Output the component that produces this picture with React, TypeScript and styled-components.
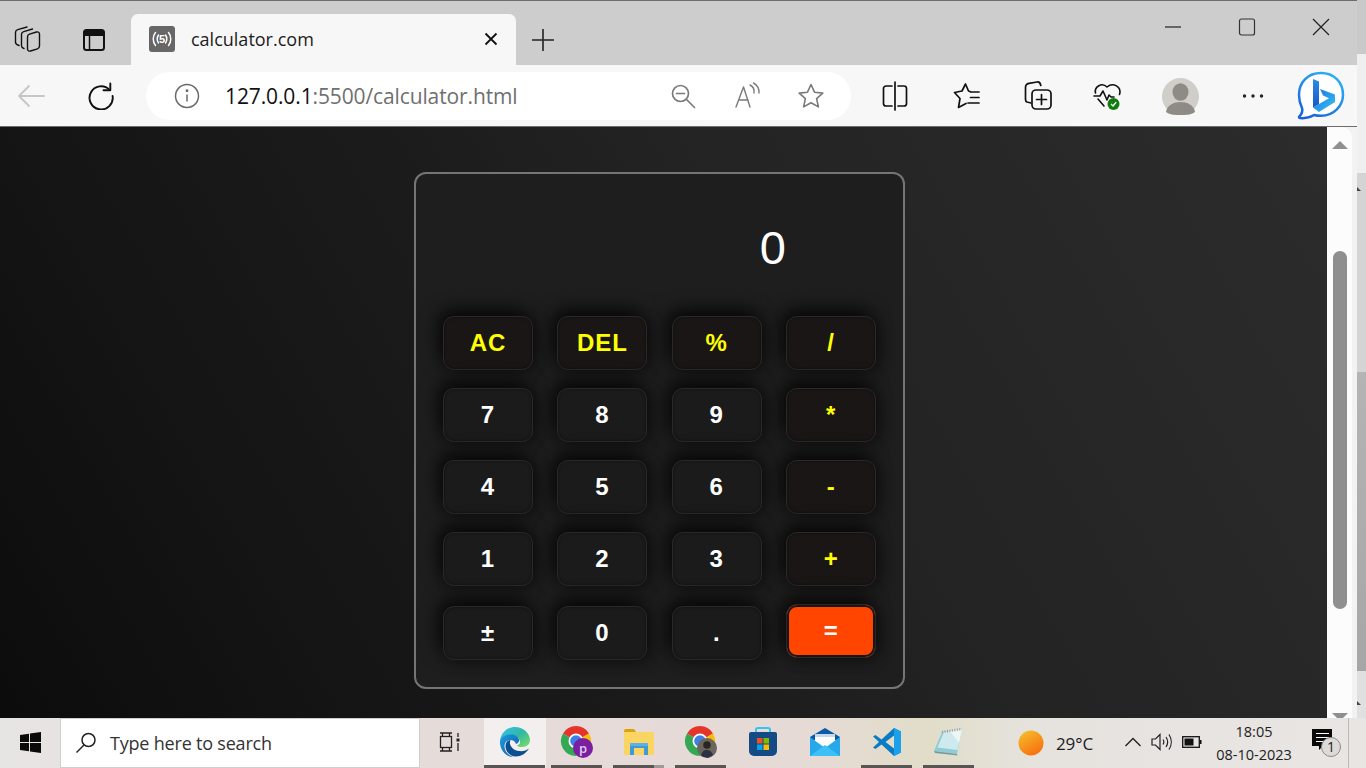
import React from "react";
import styled, { createGlobalStyle } from "styled-components";

const Global = createGlobalStyle`
  html, body { margin: 0; padding: 0; height: 768px; overflow: hidden; background: #111; }
  * { box-sizing: border-box; }
`;

const UI = `"Open Sans", "Noto Sans", "Liberation Sans", sans-serif`;

const Desktop = styled.div`
  width: 1366px; height: 768px; display: flex; flex-direction: column; overflow: hidden;
`;
const Upper = styled.div`
  display: flex; height: 718px;
`;
const Browser = styled.div`
  width: 1357px; display: flex; flex-direction: column;
`;
const Backdrop = styled.div`
  width: 9px; position: relative;
  background: linear-gradient(180deg, #c9c9c9 0 54px, #efefef 54px 173px, #d4d4d4 173px 372px, #b4b4b4 372px, #a6a6a6 671px, #e0e0e0 671px 100%);
  &::before, &::after {
    content: ""; position: absolute; left: 0; width: 0; height: 0;
    border-bottom: 4px solid #444; border-right: 4px solid transparent;
  }
  &::before { top: 187px; }
  &::after { top: 701px; }
`;
const TabStrip = styled.div`
  height: 65px; background: #cdcdcd; border-top: 1px solid #6e6e6e;
  display: flex; align-items: flex-end;
`;
const StripButton = styled.div`
  width: 56px; height: 50px; display: flex; align-items: center; justify-content: center; padding-bottom: 1px; flex: none;
`;
const StripLead = styled.div`
  display: flex; width: 131px; gap: 10px; flex: none;
`;
const Tab = styled.div`
  width: 385px; height: 51px; background: #f7f7f7; border-radius: 7px 7px 0 0;
  display: flex; align-items: center; padding: 0 18px 2px 18px; gap: 16px; flex: none;
`;
const TabTitle = styled.span`
  font: 400 18px ${UI}; color: #1c1c1c; flex: 1; white-space: nowrap;
`;
const NewTab = styled.div`
  width: 54px; height: 50px; display: flex; align-items: center; justify-content: center; flex: none;
`;
const Spacer = styled.div`
  flex: 1;
`;
const WindowControls = styled.div`
  display: flex; height: 64px; align-items: flex-start; padding: 14px 24px 0 0; gap: 50px;
`;
const Toolbar = styled.div`
  height: 62px; background: #f7f7f7; display: flex; align-items: center;
  padding: 1px 0 0 14px; border-bottom: 1px solid #6d6d6d;
`;
const NavIcon = styled.div<{ $w: number; $ml?: number }>`
  width: ${p => p.$w}px; margin-left: ${p => p.$ml ?? 0}px; display: flex; align-items: center; justify-content: center; height: 48px; flex: none;
`;
const Omnibox = styled.div`
  width: 705px; height: 48px; background: #fff; border-radius: 24px; margin-left: 25px; margin-right: 8px;
  display: flex; align-items: center; padding-left: 28px; flex: none;
`;
const Url = styled.div`
  font: 400 21px ${UI}; letter-spacing: -0.12px; margin-left: 25px; width: 440px; white-space: nowrap; color: #6f6f6f; padding-bottom: 1px; flex: none;
`;
const UrlHost = styled.span`
  color: #111;
`;
const Main = styled.div`
  flex: 1; display: flex; min-height: 0; background: #f2f2f2;
`;
const Page = styled.div`
  width: 1327px; flex: none;
  background: linear-gradient(60deg, #0c0c0c 0%, #141414 20%, #1c1c1c 45%, #232323 60%, #2c2c2c 100%);
  display: flex; justify-content: center; padding: 45px 0 0 0; overflow: hidden;
`;
const Calculator = styled.div`
  width: 491px; height: 517px; border: 2px solid #757575; border-radius: 12px; padding: 27px 27px 0 27px;
  display: flex; flex-direction: column; background: #1e1e1e; margin-left: -8px;
`;
const Display = styled.div`
  height: 115px; font: 400 47px "Liberation Sans", Arial, sans-serif; color: #fff;
  display: flex; justify-content: flex-end; align-items: flex-start; padding: 20px 90px 0 0; line-height: 54px;
`;
const Keys = styled.div`
  display: grid; grid-template-columns: repeat(4, 90px); column-gap: 24.4px;
  grid-template-rows: 54px 54px 54px 54px 54px; row-gap: 18px;
`;
const Key = styled.button<{ $op?: boolean; $fifth?: boolean }>`
  width: 90px; height: 54px; padding: 0; border: 1px solid #292929; border-radius: 11px;
  background: ${p => (p.$op ? "#1a1616" : "#1b1b1b")};
  color: ${p => (p.$op ? "#ffff00" : "#ffffff")};
  font: 700 24px "Liberation Sans", Arial, sans-serif; letter-spacing: 1px;
  box-shadow: -4px -6px 18px rgba(0, 0, 0, 0.8), 6px 3px 14px rgba(0, 0, 0, 0.3), inset 0 0 3px rgba(0, 0, 0, 0.5);
  margin-top: ${p => (p.$fifth ? "2px" : "0")};
`;
const EqualKey = styled(Key)`
  background: #ff4500; color: #fff;
  box-shadow: inset 0 0 0 2px #161616, -4px -6px 18px rgba(0, 0, 0, 0.8), 6px 3px 14px rgba(0, 0, 0, 0.3);
`;
const Rail = styled.div`
  width: 25px; flex: none; background: #fcfcfc; border-top-right-radius: 10px;
  display: flex; flex-direction: column; align-items: center; padding: 14px 0 0 0;
`;
const RailUp = styled.div`
  width: 0; height: 0; flex: none; border-left: 8px solid transparent; border-right: 8px solid transparent; border-bottom: 8px solid #8f8f8f;
`;
const Thumb = styled.div`
  width: 14px; height: 358px; flex: none; border-radius: 7px; background: #8f8f8f; margin-top: 102px;
`;
const RailDown = styled.div`
  width: 0; height: 0; flex: none; border-left: 8px solid transparent; border-right: 8px solid transparent; border-top: 8px solid #8f8f8f; margin-top: 104px;
`;
const Taskbar = styled.div`
  height: 50px; display: flex; align-items: stretch;
  background: linear-gradient(90deg, #e7e4e4 0%, #e5dbd9 35%, #e6dad6 58%, #e1ddc9 68%, #e6e3df 76%, #e8e5e3 100%);
`;
const StartButton = styled.div`
  width: 60px; display: flex; align-items: center; justify-content: center; padding-bottom: 2px;
`;
const SearchBox = styled.div`
  width: 360px; background: #fff; border: 1px solid #cfcfcf; display: flex; align-items: center; padding: 0 0 0 14px; gap: 13px;
`;
const SearchText = styled.span`
  font: 400 18px ${UI}; color: #333; letter-spacing: -0.2px;
`;
const TaskView = styled.div`
  width: 64px; display: flex; align-items: center; justify-content: center; padding: 0 4px 3px 0;
`;
const TaskItem = styled.div<{ $active?: boolean; $bar?: boolean; $split?: boolean }>`
  width: 62px; display: flex; align-items: center; justify-content: center; position: relative; padding-bottom: 2px;
  background: ${p => (p.$active ? "#f3efef" : "transparent")};
  &::after {
    content: "";
    display: ${p => (p.$bar ? "block" : "none")};
    position: absolute; bottom: 0; height: 3px;
    left: ${p => (p.$active ? "0" : "5px")}; right: ${p => (p.$active ? "1px" : "6px")};
    background: ${p => (p.$split ? "linear-gradient(90deg, #5a5553 0 80%, #9d9a98 80%)" : "#5a5553")};
  }
`;
const Tray = styled.div`
  margin-left: auto; display: flex; align-items: center; padding-right: 13px;
`;
const Temp = styled.span`
  font: 400 17px ${UI}; color: #1d1d1d; margin-left: 12px; width: 66px; letter-spacing: -0.1px; flex: none;
`;
const TrayIcon = styled.div<{ $w: number }>`
  width: ${p => p.$w}px; display: flex; align-items: center; justify-content: center; flex: none; padding-bottom: 3px;
`;
const Clock = styled.div`
  width: 100px; flex: none; text-align: center; font: 400 14.5px/23px ${UI}; color: #222;
`;
const ShowDesktop = styled.div`
  width: 5px; height: 100%; border-left: 1px solid #bdbaba; flex: none;
`;

const stroke = { fill: "none", stroke: "#111", strokeWidth: 1.5, strokeLinecap: "round" as const, strokeLinejoin: "round" as const };
const grey = { ...stroke, stroke: "#7a7a7a" };

const Collections = () => (
  <svg width="28" height="28" viewBox="0 0 28 28" {...stroke} strokeWidth={1.4}>
    <path d="M13.5 11c0-1.500.8-2.400 2-2.800l7-2.200c1.600-.5 3 .5 3 2V20c0 1.500-.8 2.400-2 2.800l-7 2.200c-1.600.5-3-.5-3-2z" />
    <path d="M10 22.500c-1.500-.5-2.500-1.300-2.500-2.800V8.500c0-1.600.8-2.500 2.200-2.900L18.500 3" />
    <path d="M5 19.500c-1.800-.6-3.500-1.500-3.500-3.200V6.500c0-1.600.8-2.500 2.200-2.900L13 1" />
  </svg>
);
const VerticalTabs = () => (
  <svg width="24" height="24" viewBox="0 0 24 24">
    <rect x="2" y="2" width="20" height="20" rx="2.500" fill="none" stroke="#111" strokeWidth="2" />
    <path d="M3 3h18v5H3z" fill="#111" />
    <path d="M7.500 8v13" stroke="#111" strokeWidth="1.500" />
  </svg>
);
const Favicon = () => (
  <svg width="26" height="26" viewBox="0 0 26 26">
    <rect width="26" height="26" rx="3" fill="#676767" />
    <path d="M6.500 6.500c-3 3.500-3 9.500 0 13M9.500 9c-1.700 2.300-1.700 6 0 8M19.500 6.500c3 3.500 3 9.500 0 13M16.500 9c1.700 2.300 1.700 6 0 8" fill="none" stroke="#fff" strokeWidth="1.500" strokeLinecap="round" />
    <text x="13" y="17" fontSize="11" fontWeight="700" fill="#fff" textAnchor="middle" fontFamily="Liberation Sans, sans-serif">5</text>
  </svg>
);
const CloseX = () => (
  <svg width="14" height="14" viewBox="0 0 14 14"><path d="M1.500 1.500l11 11M12.500 1.500l-11 11" stroke="#111" strokeWidth="1.800" /></svg>
);
const Plus = () => (
  <svg width="24" height="24" viewBox="0 0 24 24"><path d="M12 1v22M1 12h22" stroke="#222" strokeWidth="1.600" /></svg>
);
const Minimize = () => (
  <svg width="24" height="24" viewBox="0 0 24 24"><path d="M4 12h16" stroke="#222" strokeWidth="1.200" /></svg>
);
const Maximize = () => (
  <svg width="24" height="24" viewBox="0 0 24 24"><rect x="4.500" y="4" width="15" height="16" rx="2" fill="none" stroke="#333" strokeWidth="1.200" /></svg>
);
const CloseWin = () => (
  <svg width="24" height="24" viewBox="0 0 24 24"><path d="M4 4l16 16M20 4L4 20" stroke="#222" strokeWidth="1.200" /></svg>
);
const Back = () => (
  <svg width="30" height="26" viewBox="0 0 30 26"><path d="M28 13H3M13 3L3 13l10 10" fill="none" stroke="#c6c6c6" strokeWidth="1.800" strokeLinecap="round" strokeLinejoin="round" /></svg>
);
const Refresh = () => (
  <svg width="28" height="28" viewBox="0 0 28 28" fill="none" stroke="#111" strokeWidth="1.900" strokeLinecap="round" strokeLinejoin="round">
    <path d="M22.500 7.800A11.600 11.600 0 1 0 25.600 14" />
    <path d="M23.300 1.500v6.800h-6.800" />
  </svg>
);
const Info = () => (
  <svg width="26" height="26" viewBox="0 0 26 26" fill="none" stroke="#6a6a6a" strokeWidth="1.500">
    <circle cx="13" cy="13" r="11.500" />
    <path d="M13 11.500v7" /><circle cx="13" cy="7.800" r="0.700" fill="#6a6a6a" />
  </svg>
);
const ZoomOut = () => (
  <svg width="26" height="26" viewBox="0 0 26 26" {...grey} strokeWidth={1.700}>
    <circle cx="10.500" cy="10.500" r="8" /><path d="M6.500 10.500h8M16.500 16.500l8 8" />
  </svg>
);
const ReadAloud = () => (
  <svg width="28" height="28" viewBox="0 0 28 28" {...grey} strokeWidth={1.400}>
    <path d="M2 25L9.500 5 16 25M4.600 18h9.600" /><path d="M16 3c3 1.500 4.500 5 4 8M19.500 1c4 2 6 6.500 5.500 10" />
  </svg>
);
const Star = () => (
  <svg width="28" height="28" viewBox="0 0 28 28" {...grey} strokeWidth={1.600}>
    <path d="M14 2.500l3.500 7.700 8.300.9-6.200 5.600 1.800 8.200-7.400-4.200-7.400 4.200 1.800-8.200-6.200-5.600 8.300-.9z" />
  </svg>
);
const Split = () => (
  <svg width="26" height="30" viewBox="0 0 26 30" {...stroke} strokeWidth={1.700}>
    <path d="M10 5H4a2.500 2.500 0 0 0-2.500 2.500v15A2.500 2.500 0 0 0 4 25h6M16 5h6a2.500 2.500 0 0 1 2.500 2.500v15A2.500 2.500 0 0 1 22 25h-6M13 1v28" />
  </svg>
);
const Favorites = () => (
  <svg width="28" height="28" viewBox="0 0 28 28" {...stroke} strokeWidth={1.700}>
    <path d="M17 9.500L15.500 9 12.500 2 9 9l-7.500 1.500 5.500 6-1.500 9 7.500-4" />
    <path d="M17.500 10h8.500M17.500 15.500h8.500M15 21h11" />
  </svg>
);
const AddCollection = () => (
  <svg width="28" height="30" viewBox="0 0 28 30" {...stroke} strokeWidth={1.700}>
    <path d="M7 22l-4-1c-1-.4-1.500-1.200-1.500-2.500V6.500C1.500 4 3 2.800 5 2.400L13 1c2-.3 3.300.7 3.800 3.500" />
    <rect x="8" y="9" width="19" height="19" rx="4" />
    <path d="M17.500 13.500v10M12.500 18.500h10" />
  </svg>
);
const Health = () => (
  <svg width="30" height="30" viewBox="0 0 30 30">
    <path d="M2.500 12C1 5.500 9 1 14 6c6-5 15-.5 12.500 7.500M1 15h6l3-5 4 9 2-5 2 2h3M5 18l6 7" fill="none" stroke="#111" strokeWidth="1.600" strokeLinecap="round" strokeLinejoin="round" />
    <circle cx="20.500" cy="23" r="6" fill="#107c10" />
    <path d="M18 23l2 2 3.200-3.800" stroke="#fff" strokeWidth="1.300" fill="none" />
  </svg>
);
const Avatar = () => (
  <svg width="37" height="37" viewBox="0 0 37 37">
    <circle cx="18.500" cy="18.500" r="18.500" fill="#d0cec9" />
    <ellipse cx="18.500" cy="14" rx="8" ry="8.800" fill="#8e8a85" />
    <path d="M4 34c1-7 8-10 14.500-10S32 27 33 34c-4 3-9 3-14.500 3S8 37 4 34z" fill="#8e8a85" />
  </svg>
);
const Dots = () => (
  <svg width="24" height="6" viewBox="0 0 24 6"><circle cx="3.500" cy="3" r="1.700" fill="#222" /><circle cx="12" cy="3" r="1.700" fill="#222" /><circle cx="20.500" cy="3" r="1.700" fill="#222" /></svg>
);
const Bing = () => (
  <svg width="50" height="50" viewBox="0 0 50 50">
    <defs>
      <linearGradient id="bb" x1="0.800" y1="0" x2="0.200" y2="1"><stop offset="0" stopColor="#2bb2f3" /><stop offset="1" stopColor="#1a62dc" /></linearGradient>
      <linearGradient id="bg" x1="0" y1="0" x2="1" y2="1"><stop offset="0" stopColor="#1a6fe8" /><stop offset="1" stopColor="#39c4ee" /></linearGradient>
      <linearGradient id="bs" x1="0" y1="0" x2="0" y2="1"><stop offset="0" stopColor="#2a8ce8" /><stop offset="1" stopColor="#1559c8" /></linearGradient>
    </defs>
    <path d="M25 2C12 2 3 11 3 24c0 5 1 9 3 13 .8 2 .3 6-3 9 0 .5 0 1 1 1 5 .5 10-.5 14-3 2 .5 5 .8 7 .8 13 0 22-10 22-21C47 11 38 2 25 2z" fill="#fff" stroke="url(#bb)" strokeWidth="2.500" strokeLinejoin="round" />
    <path d="M17 36.500l6-3.500 10-5.800-6-2.700-3-6.500 15 5.500v7.500L23 41z" fill="url(#bg)" />
    <path d="M17 8l6 2.500V33l-6 3.500z" fill="url(#bs)" />
  </svg>
);
const WinLogo = () => (
  <svg width="21" height="21" viewBox="0 0 21 21"><path d="M0 3l9-1.300v8.300H0zM10 1.500L21 0v10H10zM0 11h9v8.300L0 18zM10 11h11v10l-11-1.500z" fill="#0a0a0a" /></svg>
);
const SearchGlass = () => (
  <svg width="22" height="22" viewBox="0 0 22 22" fill="none" stroke="#222" strokeWidth="1.500"><circle cx="13.500" cy="8" r="6.500" /><path d="M9 13L1.500 20.500" /></svg>
);
const TaskViewIcon = () => (
  <svg width="22" height="20" viewBox="0 0 22 20" fill="none" stroke="#222" strokeWidth="1.300">
    <path d="M1 1h12M1 19h12" /><path d="M3.500 1v3.500M10.500 1v3.500M3.500 15.500V19M10.500 15.500V19" /><rect x="1.500" y="4.500" width="11" height="11" />
    <path d="M19 1v4M19 11v8" /><rect x="17.500" y="6.500" width="3" height="3" fill="#222" stroke="none" />
  </svg>
);
const Edge = () => (
  <svg width="32" height="32" viewBox="0 0 32 32">
    <defs>
      <linearGradient id="e1" x1="0" y1="0" x2="1" y2="1"><stop offset="0" stopColor="#35c1f1" /><stop offset="0.500" stopColor="#2fb9a6" /><stop offset="1" stopColor="#7fe05c" /></linearGradient>
      <linearGradient id="e2" x1="0" y1="0" x2="1" y2="1"><stop offset="0" stopColor="#1b9de2" /><stop offset="1" stopColor="#0c59a4" /></linearGradient>
    </defs>
    <path d="M1 15C2 6 9 1 16 1c9 0 15 7 15 13 0 4-3 7-8 7-2 0-4-.5-5-1.500 2-.5 3.500-2 3-4-1-4-5-7-10-6-5 .5-9 3-10 5.500z" fill="url(#e1)" />
    <path d="M1 15c1-4 6-6.500 11-6.500 4 0 7 2 8 5 .5 2-1 4-3 4.500-1-3-3-4-5.500-4-4 0-6 3-6 6.500 0 5 4 9 9 10.500C7 31 .5 24 1 15z" fill="url(#e2)" />
    <path d="M11.500 14c-3.500.5-5 3-5 6.500 0 5 4.500 10 10.500 10 5 0 10-3 13-8-2.500 2-6 3-10 2.500-5-.5-8-3.500-9-7-.3-1.500 0-3 .5-4z" fill="#0b4f91" />
  </svg>
);
const ChromeBase = () => (
  <>
    <path d="M16 16L3 8.500A15 15 0 0 1 29 8.500z" fill="#e5352b" />
    <path d="M16 16L29 8.500A15 15 0 0 1 16 31z" fill="#fbbc05" />
    <path d="M16 16L16 31A15 15 0 0 1 3 8.500z" fill="#34a853" />
    <circle cx="16" cy="16" r="7.500" fill="#fff" />
    <circle cx="16" cy="16" r="5.800" fill="#3f7fe8" />
  </>
);
const ChromeP = () => (
  <svg width="34" height="34" viewBox="0 0 34 34">
    <ChromeBase />
    <circle cx="23" cy="23" r="10" fill="#7a1fa2" />
    <text x="23" y="28" textAnchor="middle" fontSize="13" fill="#e0c8ee" fontFamily="Open Sans, sans-serif" fontWeight="600">p</text>
  </svg>
);
const ChromeFace = () => (
  <svg width="34" height="34" viewBox="0 0 34 34">
    <ChromeBase />
    <circle cx="23" cy="23" r="10" fill="#6a665d" />
    <circle cx="23" cy="20" r="3.800" fill="#2c2420" />
    <path d="M17 31c1-5 3-6 6-6s5 2 6 5l-5 3z" fill="#2c3040" />
  </svg>
);
const Folder = () => (
  <svg width="32" height="28" viewBox="0 0 32 28">
    <path d="M1 3a2 2 0 0 1 2-2h8l2 3H1z" fill="#d9a20f" />
    <rect x="1" y="4" width="30" height="23" rx="1" fill="#fbd561" />
    <path d="M7 27V16h18v11h-4v-7H11v7z" fill="#3f9ad8" />
    <rect x="7" y="15" width="18" height="3" fill="#5cb1e8" />
  </svg>
);
const Store = () => (
  <svg width="30" height="30" viewBox="0 0 30 30">
    <path d="M8 6V2.500C8 1.500 9 1 10 1h10c1 0 2 .5 2 1.500V6" fill="none" stroke="#35c3f3" strokeWidth="2" />
    <path d="M1 7a2 2 0 0 1 2-2h24a2 2 0 0 1 2 2v17a5 5 0 0 1-5 5H6a5 5 0 0 1-5-5z" fill="#154b85" />
    <rect x="9" y="11" width="5.500" height="5.500" fill="#f25022" />
    <rect x="15.500" y="11" width="5.500" height="5.500" fill="#7fba00" />
    <rect x="9" y="17.500" width="5.500" height="5.500" fill="#00a4ef" />
    <rect x="15.500" y="17.500" width="5.500" height="5.500" fill="#ffb900" />
  </svg>
);
const Mail = () => (
  <svg width="30" height="28" viewBox="0 0 30 28">
    <path d="M0 9L15 0l15 9v3H0z" fill="#0a5aa8" />
    <path d="M5 6h20v12H5z" fill="#fff" />
    <path d="M5 6h20v3H5z" fill="#c6d9ea" />
    <path d="M0 9l15 11L30 9v19H0z" fill="#27a8ea" />
    <path d="M0 28l15-11 15 11z" fill="#3cc0f5" />
  </svg>
);
const VSCode = () => (
  <svg width="30" height="30" viewBox="0 0 30 30">
    <path d="M22 1l7 3.500v21L22 29 9.500 17.500 3.500 22 1 20.500 7 15 1 9.500 3.500 8l6 4.500z" fill="#0a7cc4" />
    <path d="M22 1l7 3.500v21L22 29z" fill="#1ba1ec" />
    <path d="M22 8.500L13.500 15l8.500 6.500z" fill="#e3ddc9" />
  </svg>
);
const Notepad = () => (
  <svg width="32" height="30" viewBox="0 0 32 30">
    <path d="M9 5l20-3-5 25-23-3z" fill="#8fcdd6" />
    <path d="M11 5l18-3-4.500 21-20-2.500z" fill="#cfeaee" />
    <path d="M17 4l12-2-3 14z" fill="#eef6f6" />
    <path d="M9 5l20-3" stroke="#9a9a9a" strokeWidth="2.500" strokeDasharray="1 1.500" />
    <path d="M1 24l23 3 .5 1.500L2 26z" fill="#789a9e" />
  </svg>
);
const Chevron = () => (
  <svg width="18" height="10" viewBox="0 0 18 10"><path d="M1.500 9L9 1.500 16.500 9" fill="none" stroke="#222" strokeWidth="1.400" /></svg>
);
const Speaker = () => (
  <svg width="22" height="18" viewBox="0 0 22 18" fill="none" stroke="#222" strokeWidth="1.200">
    <path d="M1 6h3.500L9 1.500v15L4.500 12H1z" /><path d="M12 6.500c1 1.500 1 3.500 0 5M15 4c2 3 2 7 0 10M18 1.500c3 4.500 3 10.500 0 15" />
  </svg>
);
const Battery = () => (
  <svg width="20" height="12" viewBox="0 0 20 12"><rect x=".7" y=".7" width="16.600" height="10.600" fill="none" stroke="#111" strokeWidth="1.300" /><rect x="2.500" y="2.500" width="9" height="7" fill="#111" /><rect x="18" y="4" width="1.500" height="4" fill="#111" /></svg>
);
const Sun = () => (
  <svg width="26" height="26" viewBox="0 0 26 26">
    <defs><linearGradient id="sn" x1="0.200" y1="0" x2="0.800" y2="1"><stop offset="0" stopColor="#f4bd2d" /><stop offset="1" stopColor="#f96a0c" /></linearGradient></defs>
    <circle cx="13" cy="13" r="12.500" fill="url(#sn)" />
  </svg>
);
const Notify = () => (
  <svg width="32" height="30" viewBox="0 0 32 30">
    <path d="M2 2h20v17h-9l-4 4v-4H2z" fill="#0a0a0a" />
    <path d="M6 6.500h13M6 10.500h13M6 14.500h9" stroke="#fff" strokeWidth="1" />
    <circle cx="21" cy="20" r="9.500" fill="#dedad8" stroke="#8b8b8b" strokeWidth="1" />
    <text x="21" y="25" fontSize="14" textAnchor="middle" fill="#222" fontFamily="Open Sans, sans-serif">1</text>
  </svg>
);

const rows: { l: string; op?: boolean }[][] = [
  [{ l: "AC", op: true }, { l: "DEL", op: true }, { l: "%", op: true }, { l: "/", op: true }],
  [{ l: "7" }, { l: "8" }, { l: "9" }, { l: "*", op: true }],
  [{ l: "4" }, { l: "5" }, { l: "6" }, { l: "-", op: true }],
  [{ l: "1" }, { l: "2" }, { l: "3" }, { l: "+", op: true }],
];

export default function App() {
  return (
    <Desktop>
      <Global />
      <Upper>
        <Browser>
          <TabStrip>
            <StripLead>
              <StripButton><Collections /></StripButton>
              <StripButton><VerticalTabs /></StripButton>
            </StripLead>
            <Tab>
              <Favicon />
              <TabTitle>calculator.com</TabTitle>
              <CloseX />
            </Tab>
            <NewTab><Plus /></NewTab>
            <Spacer />
            <WindowControls>
              <Minimize /><Maximize /><CloseWin />
            </WindowControls>
          </TabStrip>
          <Toolbar>
            <NavIcon $w={34}><Back /></NavIcon>
            <NavIcon $w={40} $ml={33}><Refresh /></NavIcon>
            <Omnibox>
              <Info />
              <Url><UrlHost>127.0.0.1</UrlHost>:5500/calculator.html</Url>
              <NavIcon $w={36}><ZoomOut /></NavIcon>
              <NavIcon $w={94}><ReadAloud /></NavIcon>
              <NavIcon $w={32}><Star /></NavIcon>
            </Omnibox>
            <NavIcon $w={72}><Split /></NavIcon>
            <NavIcon $w={71}><Favorites /></NavIcon>
            <NavIcon $w={71}><AddCollection /></NavIcon>
            <NavIcon $w={70}><Health /></NavIcon>
            <NavIcon $w={74}><Avatar /></NavIcon>
            <NavIcon $w={72}><Dots /></NavIcon>
            <NavIcon $w={64}><Bing /></NavIcon>
          </Toolbar>
          <Main>
            <Page>
              <Calculator>
                <Display>0</Display>
                <Keys>
                  {rows.flat().map(k => (
                    <Key key={k.l} $op={k.op}>{k.l}</Key>
                  ))}
                  <Key $fifth>±</Key>
                  <Key $fifth>0</Key>
                  <Key $fifth>.</Key>
                  <EqualKey>=</EqualKey>
                </Keys>
              </Calculator>
            </Page>
            <Rail>
              <RailUp />
              <Thumb />
              <RailDown />
            </Rail>
          </Main>
        </Browser>
        <Backdrop />
      </Upper>
      <Taskbar>
        <StartButton><WinLogo /></StartButton>
        <SearchBox><SearchGlass /><SearchText>Type here to search</SearchText></SearchBox>
        <TaskView><TaskViewIcon /></TaskView>
        <TaskItem $active $bar><Edge /></TaskItem>
        <TaskItem $bar><ChromeP /></TaskItem>
        <TaskItem $bar $split><Folder /></TaskItem>
        <TaskItem $bar><ChromeFace /></TaskItem>
        <TaskItem><Store /></TaskItem>
        <TaskItem><Mail /></TaskItem>
        <TaskItem $bar><VSCode /></TaskItem>
        <TaskItem $bar><Notepad /></TaskItem>
        <Tray>
          <Sun />
          <Temp>29°C</Temp>
          <TrayIcon $w={22}><Chevron /></TrayIcon>
          <TrayIcon $w={36}><Speaker /></TrayIcon>
          <TrayIcon $w={24}><Battery /></TrayIcon>
          <Clock>18:05<br />08-10-2023</Clock>
          <TrayIcon $w={44}><Notify /></TrayIcon>
          <ShowDesktop />
        </Tray>
      </Taskbar>
    </Desktop>
  );
}
